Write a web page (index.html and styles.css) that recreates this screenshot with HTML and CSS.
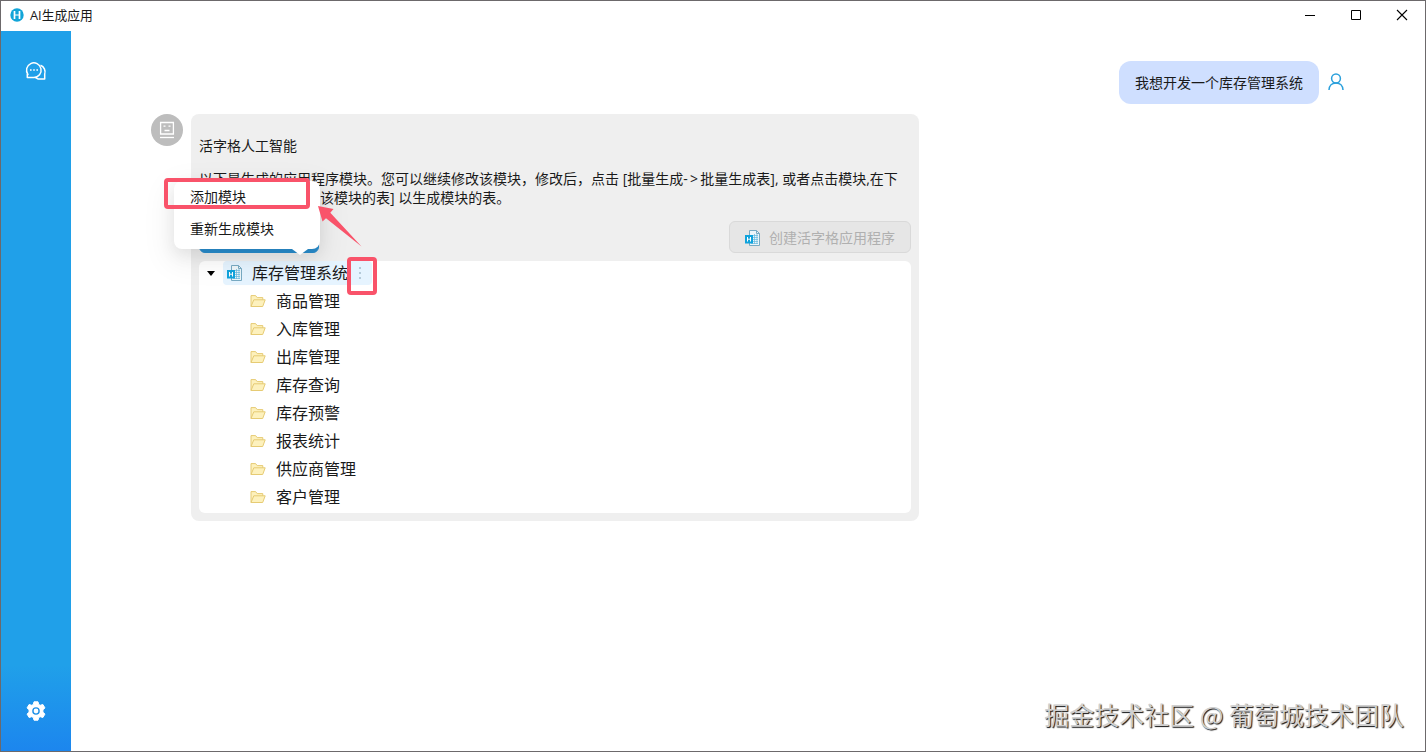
FILE: index.html
```html
<!DOCTYPE html>
<html lang="zh-CN">
<head>
    <meta charset="UTF-8">
    <meta name="viewport" content="width=device-width, initial-scale=1.0">
    <title>AI生成应用</title>
    <link rel="stylesheet" href="styles.css">
</head>
<body>
    <svg class="symbols" aria-hidden="true">
        <symbol id="folder" viewBox="0 0 16 14">
            <path d="M1 12.5V1.6h4.6l1.6 2h5.6v2.2M1 12.5l2.8-6.7h11.4l-2.5 6.7z" fill="#fdf1bd" stroke="#e6cb74" stroke-width="1" stroke-linejoin="round"/>
        </symbol>
        <symbol id="app" viewBox="0 0 16 16">
            <path d="M4.5.5h7l3 3v12h-10z" fill="#edf6fa" stroke="#78aac3"/>
            <path d="M11.5.5v3h3" fill="none" stroke="#78aac3"/>
            <path d="M6 5.5h7M6 7.5h7M6 9.5h7M6 11.5h7M6 13.5h7M9.5 4v10M12 4v10" stroke="#64b9dc" stroke-width=".7"/>
            <path d="M0 5h8v8.5H0z" fill="#10a3dc"/>
            <path d="M2.500 7v4.500M5.500 7v4.500M2.500 9.200h3" stroke="#fff" stroke-width="1"/>
        </symbol>
    </svg>

    <div class="window">
        <header class="titlebar">
            <svg class="logo" viewBox="0 0 14 14">
                <circle cx="7" cy="7" r="6.7" fill="#12a5d8"/>
                <path d="M4.5 3v8M9.5 3v8" stroke="#fff" stroke-width="1.7"/>
                <path d="M5 7h4" stroke="#fff" stroke-width="1"/>
            </svg>
            <span class="title">AI生成应用</span>
            <svg class="control" viewBox="0 0 12 12"><path d="M1 6.5h10" stroke="#000"/></svg>
            <svg class="control" viewBox="0 0 12 12"><path d="M1.5 1.5h9v9h-9z" fill="none" stroke="#000"/></svg>
            <svg class="control" viewBox="0 0 12 12"><path d="M1 1l10 10M11 1L1 11" stroke="#000" stroke-width="1.1"/></svg>
        </header>

        <div class="body">
            <nav class="sidebar">
                <svg class="nav-icon" viewBox="0 0 22 20" fill="none" stroke="#fff" stroke-width="1.5" stroke-linejoin="round">
                    <path d="M3 13.6A7.3 7.3 0 1 1 8.9 16.5H2.3V13z"/>
                    <path d="M15.5 4.2a7.2 7.2 0 0 1 4.2 9v4.9h-6.4l-2.8-1.5"/>
                    <path d="M5 9h1.6M8.2 9h1.6M11.4 9H13"/>
                </svg>
                <svg class="nav-icon gear" viewBox="0 0 20 20">
                    <path d="M8 .8h4l.7 2.7 1.5.8 2.7-.8 2 3.4-2 2v2.2l2 2-2 3.4-2.7-.8-1.5.8-.7 2.7H8l-.7-2.7-1.5-.8-2.7.8-2-3.4 2-2V8.9l-2-2 2-3.4 2.7.8 1.5-.8z" fill="#fff" stroke="#fff" stroke-width="1" stroke-linejoin="round"/>
                    <circle cx="10" cy="10" r="3.1" fill="none" stroke="#1e90e8" stroke-width="1.4"/>
                </svg>
            </nav>

            <main class="chat">
                <div class="message user">
                    <div class="bubble">我想开发一个库存管理系统</div>
                    <svg class="user-icon" viewBox="0 0 16 18" fill="none" stroke="#2ba0dc" stroke-width="1.5">
                        <circle cx="8" cy="5.5" r="4.4"/>
                        <path d="M1 17c.2-4.3 3-7 7-7s6.8 2.7 7 7"/>
                    </svg>
                </div>

                <div class="message assistant">
                    <div class="avatar">
                        <svg viewBox="0 0 16 18" fill="none" stroke="#fff" stroke-width="1.3">
                            <path d="M1.6 1.5h12.8V13H1.6z"/>
                            <path d="M4.5 5.2h2M9.5 5.2h2M5.5 9.5h5"/>
                            <path d="M1 16.5h14"/>
                        </svg>
                    </div>
                    <div class="card">
                        <h2 class="name">活字格人工智能</h2>
                        <p class="text"><span class="line">以下是生成的应用程序模块。您可以继续修改该模块，修改后，点击 [批量生成<span class="to">-&gt;</span>批量生成表], 或者点击模块,在下</span><span class="line covered">该模块的表] 以生成模块的表。</span></p>
                        <div class="actions">
                            <button class="btn primary"></button>
                            <button class="btn" disabled><svg class="app-icon"><use href="#app"/></svg>创建活字格应用程序</button>
                        </div>
                        <ul class="tree">
                            <li class="root">
                                <span class="switcher"></span>
                                <span class="node"><svg class="app-icon"><use href="#app"/></svg>库存管理系统<span class="more"><i></i><i></i><i></i></span></span>
                                <div class="menu">
                                    <div class="menu-item">添加模块</div>
                                    <div class="menu-item">重新生成模块</div>
                                </div>
                            </li>
                            <li><svg class="folder"><use href="#folder"/></svg>商品管理</li>
                            <li><svg class="folder"><use href="#folder"/></svg>入库管理</li>
                            <li><svg class="folder"><use href="#folder"/></svg>出库管理</li>
                            <li><svg class="folder"><use href="#folder"/></svg>库存查询</li>
                            <li><svg class="folder"><use href="#folder"/></svg>库存预警</li>
                            <li><svg class="folder"><use href="#folder"/></svg>报表统计</li>
                            <li><svg class="folder"><use href="#folder"/></svg>供应商管理</li>
                            <li><svg class="folder"><use href="#folder"/></svg>客户管理</li>
                        </ul>
                    </div>
                </div>
            </main>
        </div>

        <!-- annotations -->
        <div class="mark mark-menu"></div>
        <div class="mark mark-more"></div>
        <svg class="mark-arrow" viewBox="0 0 44 42"><path d="M0 0l15.5 3-3.2 3.7L43.5 40.500 8 12.200 4.500 15.500z" fill="#f9536a"/></svg>
        <div class="watermark">掘金技术社区 @ 葡萄城技术团队</div>
    </div>
</body>
</html>
```
FILE: styles.css
```css
* {
    box-sizing: border-box;
}
body {
    margin: 0;
    font-family: "Open Sans", "Noto Sans CJK SC", sans-serif;
    font-size: 14px;
    color: #1a1a1a;
}
svg {
    display: block;
    flex: none;
}
.symbols {
    position: absolute;
    width: 0;
    height: 0;
}
.window {
    position: relative;
    display: flex;
    flex-direction: column;
    width: 1426px;
    height: 752px;
    border: 1px solid #6c696b;
    background-color: #fff;
    overflow: hidden;
}
.titlebar {
    display: flex;
    align-items: center;
    height: 30px;
    padding: 0 17px 2px 9px;
}
.logo {
    width: 14px;
    height: 14px;
    margin-right: 6px;
}
.title {
    flex: 1;
    font-size: 12.8px;
    line-height: 20px;
}
.control {
    width: 12px;
    height: 12px;
    margin-left: 34px;
}
.body {
    display: flex;
    flex: 1;
}
.sidebar {
    display: flex;
    flex-direction: column;
    align-items: center;
    justify-content: space-between;
    width: 70px;
    padding: 30px 0;
    background: linear-gradient(#20a0e9 0%, #20a0e9 88%, #1c86ee 100%);
}
.nav-icon {
    width: 22px;
    height: 20px;
}
.gear {
    width: 20px;
}
.chat {
    flex: 1;
    padding: 30px 80px;
}
.message {
    display: flex;
}
.user {
    justify-content: flex-end;
    align-items: center;
    margin-bottom: 10px;
}
.bubble {
    width: 200px;
    height: 43px;
    border-radius: 12px;
    background-color: #cfdfff;
    line-height: 43px;
    text-align: center;
}
.user-icon {
    width: 16px;
    height: 18px;
    margin: 0 1px 1px 9px;
}
.avatar {
    display: flex;
    align-items: center;
    justify-content: center;
    width: 32px;
    height: 32px;
    margin-right: 8px;
    border-radius: 50%;
    background-color: #bdbdbd;
}
.avatar svg {
    width: 16px;
    height: 18px;
}
.card {
    width: 728px;
    padding: 22px 8px 8px;
    border-radius: 8px;
    background-color: #efefef;
}
.name {
    margin: 0 0 13px;
    font-size: 14px;
    font-weight: 400;
    line-height: 20px;
}
.text {
    margin: 0 0 14px;
    line-height: 19px;
}
.line {
    display: block;
    white-space: nowrap;
}
.to {
    letter-spacing: 2.3px;
}
.covered {
    padding-left: 121px;
}
.actions {
    display: flex;
    justify-content: space-between;
    margin-bottom: 8px;
}
.btn {
    display: flex;
    align-items: center;
    height: 32px;
    padding: 0 15px 1px;
    border: 1px solid #d9d9d9;
    border-radius: 6px;
    background-color: #e6e6e6;
    font: inherit;
    color: #b0b0b0;
}
.btn .app-icon {
    margin: 2px 8px 0 0;
}
.primary {
    width: 120px;
    border-color: #2a8fd0;
    background-color: #2a8fd0;
}
.app-icon {
    width: 16px;
    height: 16px;
}
.tree {
    margin: 0;
    padding: 0;
    border-radius: 6px;
    background-color: #fff;
    list-style: none;
    font-size: 16px;
    line-height: 24px;
}
.tree li {
    display: flex;
    align-items: center;
    height: 24px;
    margin-bottom: 4px;
    padding-left: 51px;
}
.tree .root {
    position: relative;
    padding-left: 0;
}
.tree::after {
    content: "";
    display: block;
    height: 0.1px;
}
.switcher {
    width: 24px;
}
.switcher::before {
    content: "";
    display: block;
    width: 0;
    margin-left: 8px;
    border: 4px solid transparent;
    border-top: 5px solid #000;
    border-bottom: 0;
}
.node {
    display: flex;
    align-items: center;
    height: 24px;
    padding: 0 11px 0 4px;
    border-radius: 4px;
    background-color: #e6f4ff;
}
.node .app-icon {
    margin-right: 9px;
}
.more {
    display: flex;
    flex-direction: column;
    gap: 3px;
    margin-left: 11px;
}
.more i {
    width: 2px;
    height: 2px;
    background-color: #b4cad9;
}
.folder {
    width: 16px;
    height: 14px;
    margin-right: 10px;
}
.menu {
    position: absolute;
    left: -25px;
    bottom: 36px;
    width: 146px;
    padding: 0 0 4px;
    border-radius: 8px;
    background-color: #fff;
    box-shadow: 0 6px 16px rgba(0, 0, 0, 0.08), 0 9px 28px 8px rgba(0, 0, 0, 0.05);
    font-size: 14px;
}
.menu::after {
    content: "";
    position: absolute;
    left: 118px;
    top: 100%;
    border: 8px solid transparent;
    border-top: 6px solid #fff;
    border-bottom: 0;
}
.menu-item {
    height: 32px;
    padding-left: 16px;
    line-height: 32px;
}
.mark {
    position: absolute;
    border: 4px solid #f9536a;
    border-radius: 4px;
}
.mark-menu {
    left: 163px;
    top: 177px;
    width: 146px;
    height: 31px;
}
.mark-more {
    left: 346px;
    top: 256px;
    width: 30px;
    height: 38px;
}
.mark-arrow {
    position: absolute;
    left: 317px;
    top: 205px;
    width: 44px;
    height: 42px;
}
.watermark {
    position: absolute;
    right: 21px;
    bottom: 19px;
    font-family: "Noto Sans CJK SC", sans-serif;
    font-size: 25px;
    line-height: 36px;
    color: #cfcfcf;
    text-shadow: 1px 1px 1px #111;
    white-space: nowrap;
}
```
